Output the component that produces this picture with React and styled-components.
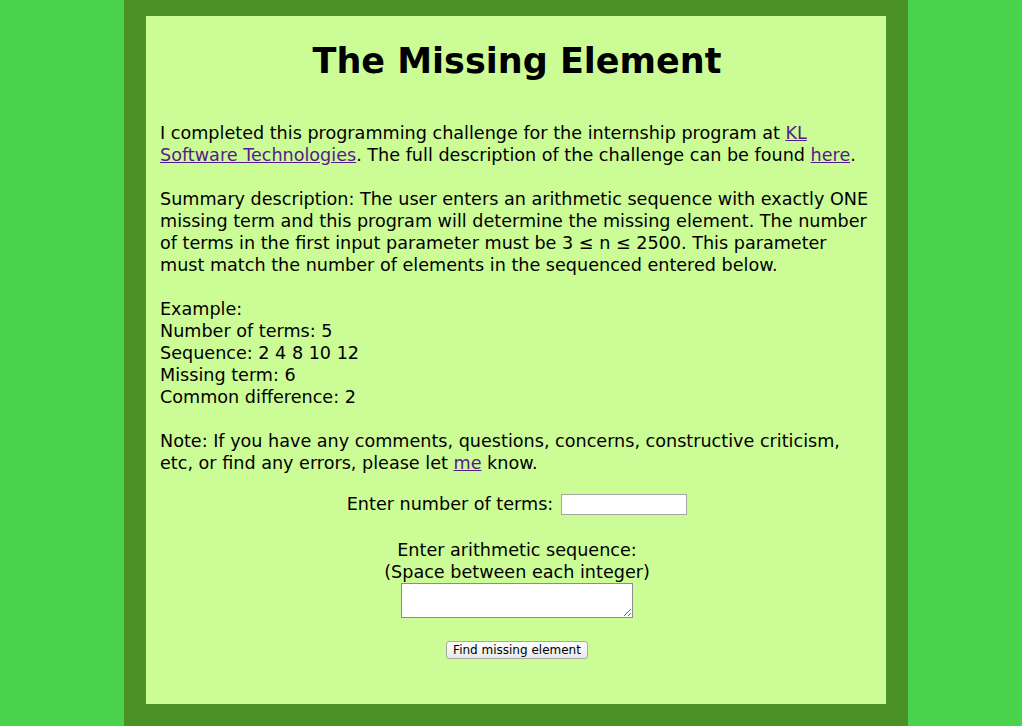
import React from "react";
import styled, { createGlobalStyle } from "styled-components";

const Global = createGlobalStyle`
  html, body { margin: 0; padding: 0; background: #4bd24c; }
  body { font-family: "DejaVu Sans", Verdana, sans-serif; }
`;

const Column = styled.div`
  width: 740px;
  margin: 0 0 0 calc(50% - 387px);
  background: #4a9126;
  padding: 16px 22px 22px;
`;

const Panel = styled.main`
  background: #ccfc96;
  height: 688px;
  box-sizing: border-box;
  padding: 14px 12px 0 14px;
  color: #000;
  font-size: 17.6px;
  line-height: 22px;
`;

const Title = styled.h1`
  margin: 10px 0 40px;
  text-align: center;
  font-size: 35px;
  line-height: 42px;
  font-weight: bold;
`;

const Para = styled.p`
  margin: 0 0 ${(p) => (p.$mb != null ? p.$mb : 22)}px;
`;

const Link = styled.a`
  color: #551a8b;
  text-decoration: underline;
`;

const Form = styled.form`
  display: flex;
  flex-direction: column;
  align-items: center;
  text-align: center;
`;

const Row = styled.div`
  display: flex;
  align-items: center;
  gap: 8px;
  margin-bottom: ${(p) => p.$mb || 0}px;
`;

const TextInput = styled.input`
  width: 126px;
  height: 21px;
  box-sizing: border-box;
  border: 1px solid #a6a6a6;
  background: #fff;
  padding: 2px;
`;

const Area = styled.textarea`
  width: 232px;
  height: 35px;
  box-sizing: border-box;
  border: 1px solid #8c8c8c;
  background: #fff;
  margin: 0;
  display: block;
`;

const Button = styled.button`
  margin-top: 23px;
  width: 142px;
  height: 18px;
  padding: 0;
  font-family: "DejaVu Sans", Verdana, sans-serif;
  font-size: 12px;
  line-height: 16px;
  color: #000;
  background: linear-gradient(#ffffff, #e8e8e8);
  border: 1px solid #a8a8a8;
  border-radius: 3px;
`;

export default function App() {
  return (
    <>
      <Global />
      <Column>
        <Panel>
          <Title>The Missing Element</Title>
          <Para>
            I completed this programming challenge for the internship program at{" "}
            <Link href="#">KL Software Technologies</Link>. The full description of the
            challenge can be found <Link href="#">here</Link>.
          </Para>
          <Para>
            Summary description: The user enters an arithmetic sequence with exactly ONE
            missing term and this program will determine the missing element. The number of
            terms in the first input parameter must be 3 ≤ n ≤ 2500. This parameter must
            match the number of elements in the sequenced entered below.
          </Para>
          <Para>
            Example:
            <br />
            Number of terms: 5
            <br />
            Sequence: 2 4 8 10 12
            <br />
            Missing term: 6
            <br />
            Common difference: 2
          </Para>
          <Para $mb={19}>
            Note: If you have any comments, questions, concerns, constructive criticism,
            etc, or find any errors, please let <Link href="#">me</Link> know.
          </Para>
          <Form onSubmit={(e) => e.preventDefault()}>
            <Row $mb={24}>
              <span>Enter number of terms:</span>
              <TextInput type="text" />
            </Row>
            <div>
              Enter arithmetic sequence:
              <br />
              (Space between each integer)
            </div>
            <Area />
            <Button type="submit">Find missing element</Button>
          </Form>
        </Panel>
      </Column>
    </>
  );
}
